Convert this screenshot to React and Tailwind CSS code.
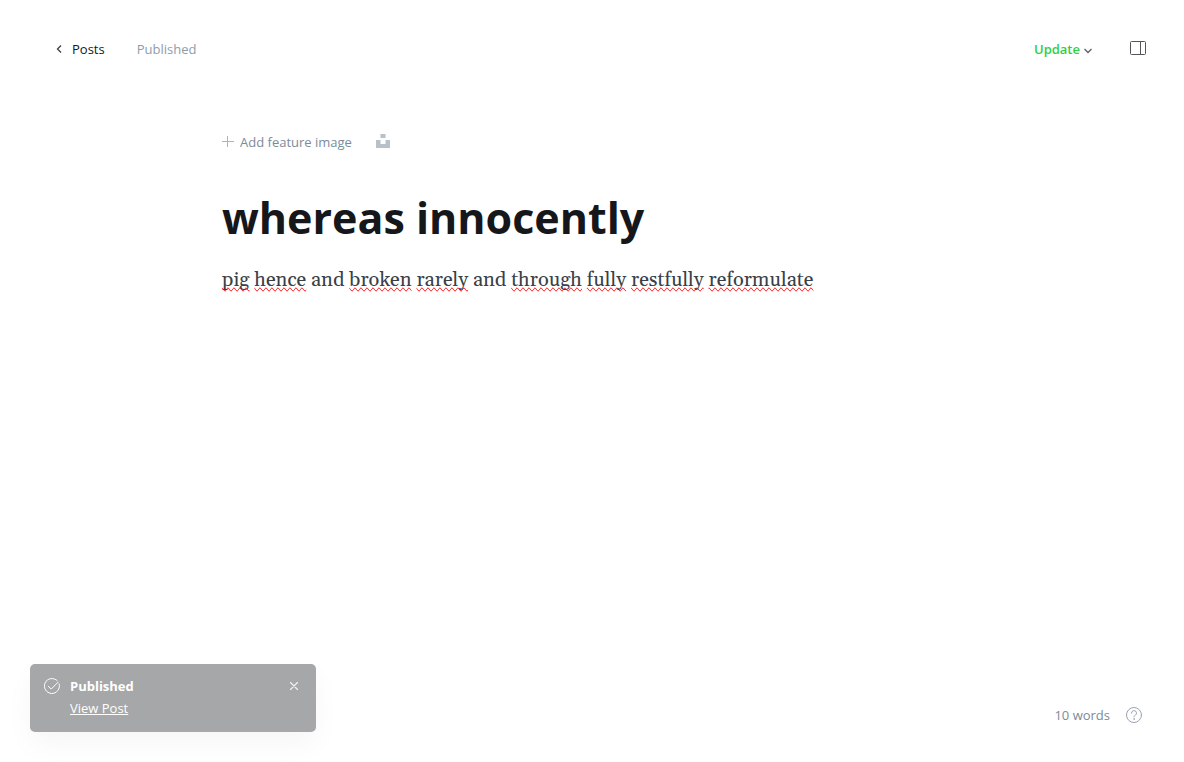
import React from "react";

function ChevronLeft() {
  return (
    <svg className="h-2 w-1.5" viewBox="0 0 6 8" fill="none" stroke="#394047" strokeWidth="1.3" aria-hidden="true">
      <path d="M5 .5 1.5 4 5 7.5" />
    </svg>
  );
}

function Misspelled({ children }) {
  return <span className="[text-decoration-line:spelling-error]">{children}</span>;
}

function Header() {
  return (
    <header className="flex items-center justify-between pt-[37px] pr-9 pl-14 leading-6">
      <div className="flex items-center gap-8">
        <a href="#posts" className="flex items-center gap-2.5 text-[13px] font-medium text-[#15171a]">
          <ChevronLeft />
          Posts
        </a>
        <span className="text-[13px] text-[#8e9cac]">Published</span>
      </div>
      <div className="flex items-center gap-9">
        <button type="button" className="flex items-center gap-1 text-[13px] font-semibold text-[#30cf43]">
          Update
          <svg className="mt-1 h-1.5 w-2" viewBox="0 0 8 6" fill="none" stroke="#5b6168" strokeWidth="1.3" aria-hidden="true">
            <path d="M.5 1 4 4.5 7.5 1" />
          </svg>
        </button>
        <button type="button" aria-label="Settings" className="-mt-0.5 p-0.5">
          <svg className="h-3.5 w-4" viewBox="0 0 16 14" fill="none" stroke="#50565c" aria-hidden="true">
            <rect x=".5" y=".5" width="15" height="13" rx="1" />
            <path d="M10.500 .5v13" />
          </svg>
        </button>
      </div>
    </header>
  );
}

function Editor() {
  return (
    <main className="mx-auto mt-[69px] w-full max-w-[740px] grow">
      <div className="flex items-center gap-6 leading-6">
        <button type="button" className="flex items-center gap-1.5 text-[13px] text-[#7c8b9a]">
          <svg className="h-3 w-3" viewBox="0 0 12 12" fill="none" stroke="#abb4be" aria-hidden="true">
            <path d="M5.5 0v11M0 5.5h12" />
          </svg>
          Add feature image
        </button>
        <button type="button" aria-label="Search Unsplash" className="-mt-0.5">
          <svg className="h-3.5 w-3.5" viewBox="0 0 14 14" fill="#b9c1c8" aria-hidden="true">
            <path d="M4.500 0h5v4h-5zM0 6h4.500v4h5V6H14v8H0z" />
          </svg>
        </button>
      </div>
      <input
        aria-label="Post title"
        defaultValue="whereas innocently"
        className="mt-8 block h-16 w-full bg-transparent text-[43px] font-bold text-[#15171a] outline-none"
      />
      <div
        aria-label="Post content"
        role="textbox"
        contentEditable
        suppressContentEditableWarning
        spellCheck={false}
        className="mt-3.5 font-['Gelasio','Georgia','Liberation_Serif',serif] text-[20px] leading-8 text-[#394047] outline-none"
      >
        <Misspelled>pig</Misspelled> <Misspelled>hence</Misspelled> and <Misspelled>broken</Misspelled>{" "}
        <Misspelled>rarely</Misspelled> and <Misspelled>through</Misspelled> <Misspelled>fully</Misspelled>{" "}
        <Misspelled>restfully</Misspelled> <Misspelled>reformulate</Misspelled>
      </div>
    </main>
  );
}

function Toast() {
  return (
    <aside
      role="status"
      className="flex w-[286px] items-start rounded-[5px] bg-[#a6a7a8] px-3.5 pt-3 pb-3.5 text-[13px] text-white shadow-[0_12px_28px_rgba(0,0,0,0.04)]"
    >
      <svg className="mt-0.5 mr-2.5 h-4 w-4" viewBox="0 0 16 16" fill="none" stroke="white" strokeLinecap="round" strokeLinejoin="round" aria-hidden="true">
        <path d="M13.100 2.500A7.500 7.500 0 1 0 15.200 6" />
        <path d="m4.300 8.200 2.900 2.900 7-7" />
      </svg>
      <div className="grow">
        <p className="leading-5 font-bold">Published</p>
        <a href="#view" className="mt-0.5 block w-fit leading-5 underline underline-offset-1">View Post</a>
      </div>
      <button type="button" aria-label="Close" className="p-1.5 pr-1">
        <svg className="h-2 w-2" viewBox="0 0 8 8" fill="none" stroke="#f2f2f2" strokeWidth="1.2" strokeLinecap="round" aria-hidden="true">
          <path d="m.5.5 7 7m0-7-7 7" />
        </svg>
      </button>
    </aside>
  );
}

export default function App() {
  return (
    <div className="flex min-h-screen flex-col bg-white font-['Segoe_UI','Open_Sans','Noto_Sans',sans-serif]">
      <Header />
      <Editor />
      <footer className="flex items-end justify-between pr-[42px] pb-[30px] pl-[30px]">
        <Toast />
        <div className="mb-[5px] flex items-center gap-4 text-[13px] leading-6 text-[#7c8b9a]">
          <span>10 words</span>
          <a href="#help" aria-label="Help">
            <svg className="h-4 w-4" viewBox="0 0 16 16" fill="none" stroke="#98a4b3" strokeLinecap="round" aria-hidden="true">
              <circle cx="8" cy="8" r="7.5" />
              <path d="M5.500 6.200a2.500 2.500 0 1 1 3.700 2.100C8.300 8.800 8 9.100 8 9.800" />
              <circle cx="8" cy="12" r=".3" />
            </svg>
          </a>
        </div>
      </footer>
    </div>
  );
}
